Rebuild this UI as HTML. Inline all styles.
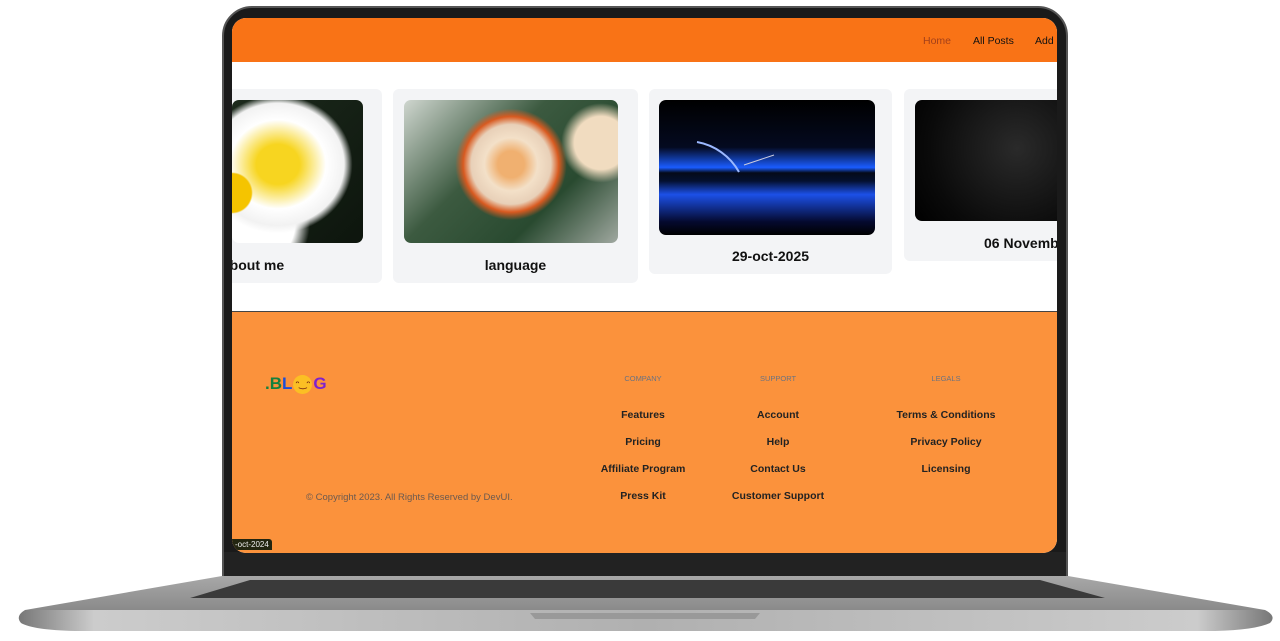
<!DOCTYPE html>
<html><head><meta charset="utf-8"><style>
*{margin:0;padding:0;box-sizing:border-box}
body{width:1280px;height:641px;background:#fff;position:relative;overflow:hidden;font-family:"Liberation Sans",sans-serif}
.bezel{position:absolute;left:222px;top:6px;width:846px;height:572px;background:#1a1a1a;border-radius:30px 30px 0 0;border:2px solid #555}
.screen{position:absolute;left:232px;top:18px;width:825px;height:535px;background:#fff;border-radius:14px 14px 14px 14px;overflow:hidden}
.hdr{position:absolute;left:0;top:0;width:100%;height:44px;background:#f97316}
.nav{position:absolute;top:17px;font-size:10.5px;color:#111}
.card{position:absolute;background:#f3f4f6;border-radius:6px;top:71px}
.img{position:absolute;left:11px;top:11px;border-radius:7px;overflow:hidden}
.ttl{position:absolute;width:100%;text-align:center;font-weight:bold;font-size:14px;color:#111}
.foot{position:absolute;left:0;top:293px;width:100%;height:242px;background:#fb923c;border-top:1px solid #444}
.h{position:absolute;font-size:7.5px;color:#6b7280;top:62px;text-align:center;width:140px}
.l{position:absolute;font-size:10.5px;font-weight:bold;color:#222;text-align:center;width:160px}
.base{position:absolute;left:15px;top:576px;width:1260px;height:56px}
</style></head><body>
<div class="bezel"></div>
<div style="position:absolute;left:224px;top:552px;width:842px;height:24px;background:#222"></div>
<div class="screen">
 <div class="hdr">
  <span class="nav" style="left:691px;color:#a3401a">Home</span>
  <span class="nav" style="left:741px">All Posts</span>
  <span class="nav" style="left:803px">Add</span>
 </div>
 <div class="card" style="left:-8px;width:158px;height:194px">
  <div class="img" style="left:8px;width:131px;height:143px;background:radial-gradient(circle at 0% 65%,#f5c400 0 12%,transparent 13%),radial-gradient(ellipse at 35% 45%,#f7d520 0 18%,#fff 40%,#f2f2f2 55%,transparent 62%),radial-gradient(ellipse at 20% 85%,#fff 0 25%,transparent 35%),linear-gradient(135deg,#1c2a1c,#0d150d)"></div>
  <div class="ttl" style="top:168px;left:-50px">about me</div>
 </div>
 <div class="card" style="left:161px;width:245px;height:194px">
  <div class="img" style="width:214px;height:143px;background:radial-gradient(circle at 50% 45%,#f0b070 0 10%,#f3e0c8 20%,#e8d0b8 30%,#d85a20 36%,transparent 42%),radial-gradient(circle at 92% 30%,#f1dcc0 0 12%,transparent 18%),linear-gradient(135deg,#cfd6cf,#3c5a40 40%,#294a30 70%,#a0a8a0)"></div>
  <div class="ttl" style="top:168px">language</div>
 </div>
 <div class="card" style="left:417px;width:243px;height:185px">
  <div class="img" style="left:10px;width:216px;height:135px;background:linear-gradient(180deg,#000 0,#040a20 35%,#1a5cff 50%,#050a18 54%,#041030 60%,#1c50e8 70%,#050a30 90%,#000)">
   <svg width="216" height="135" style="position:absolute;left:0;top:0"><path d="M38 42 A60 60 0 0 1 80 72" stroke="#9bb8ff" stroke-width="2" fill="none"/><path d="M85 65 L115 55" stroke="#ccd" stroke-width="1"/></svg>
  </div>
  <div class="ttl" style="top:159px">29-oct-2025</div>
 </div>
 <div class="card" style="left:672px;width:170px;height:172px">
  <div class="img" style="left:11px;width:170px;height:121px;background:radial-gradient(circle at 60% 40%,#2a2a2a,#0a0a0a 70%,#000)"></div>
  <div class="ttl" style="top:146px;left:80px;text-align:left">06 Novemb</div>
 </div>
 <div class="foot">
  <div style="position:absolute;left:33px;top:62px;font-weight:bold;font-size:17px;line-height:20px;height:20px;white-space:nowrap"><span style="color:#15803d">.B</span><span style="color:#1d4ed8">L</span><span style="display:inline-block;width:19px;height:19px;border-radius:50%;background:#fbbf24;vertical-align:top;margin:1px 1px 0;text-align:center;font-size:9px;line-height:19px;color:#7c2d12">ᵔ‿ᵔ</span><span style="color:#7e22ce">G</span></div>
  <div style="position:absolute;left:74px;top:180px;font-size:9.5px;color:#6b5a50">© Copyright 2023. All Rights Reserved by DevUI.</div>
  <div class="h" style="left:341px">COMPANY</div>
  <div class="h" style="left:476px">SUPPORT</div>
  <div class="h" style="left:644px">LEGALS</div>
  <div class="l" style="left:331px;top:97px">Features</div>
  <div class="l" style="left:331px;top:124px">Pricing</div>
  <div class="l" style="left:331px;top:151px">Affiliate Program</div>
  <div class="l" style="left:331px;top:178px">Press Kit</div>
  <div class="l" style="left:466px;top:97px">Account</div>
  <div class="l" style="left:466px;top:124px">Help</div>
  <div class="l" style="left:466px;top:151px">Contact Us</div>
  <div class="l" style="left:466px;top:178px">Customer Support</div>
  <div class="l" style="left:634px;top:97px">Terms &amp; Conditions</div>
  <div class="l" style="left:634px;top:124px">Privacy Policy</div>
  <div class="l" style="left:634px;top:151px">Licensing</div>
  <div style="position:absolute;left:0;top:227px;background:#222510;color:#eee;font-size:8px;padding:1px 3px;border-radius:0 3px 0 0">-oct-2024</div>
 </div>
</div>
<svg class="base" viewBox="0 0 1260 56" width="1260" height="56">
 <defs><linearGradient id="g" x1="0" y1="0" x2="0" y2="1"><stop offset="0" stop-color="#a8a8a8"/><stop offset="1" stop-color="#8a8a8a"/></linearGradient>
 <linearGradient id="e" x1="0" y1="0" x2="1" y2="0"><stop offset="0" stop-color="#777"/><stop offset=".06" stop-color="#ccc"/><stop offset=".5" stop-color="#b0b0b0"/><stop offset=".94" stop-color="#ccc"/><stop offset="1" stop-color="#777"/></linearGradient></defs>
 <path d="M207 0 L1053 0 L1250 34 L10 34 Z" fill="url(#g)"/>
 <path d="M235 4 L1025 4 L1090 22 L175 22 Z" fill="#3a3a3a"/>
 <path d="M10 34 L1250 34 Q1262 40 1255 47 Q1240 54 1200 55 L60 55 Q18 54 6 47 Q0 40 10 34 Z" fill="url(#e)"/>
 <path d="M515 37 L745 37 L740 43 L520 43 Z" fill="#999"/>
</svg>
</body></html>
